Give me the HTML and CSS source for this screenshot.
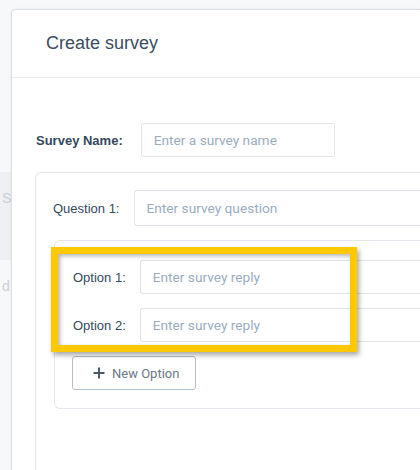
FILE: index.html
```html
<!DOCTYPE html>
<html lang="en">
<head>
<meta charset="utf-8">
<title>Create survey</title>
<link rel="stylesheet" href="styles.css">
</head>
<body>
<aside class="sidebar">
  <div class="nav-item nav-item--active">S</div>
  <div class="nav-item">d</div>
</aside>

<div class="modal">
  <div class="modal-header">Create survey</div>
  <div class="modal-body">
    <div class="name-row">
      <label class="name-label">Survey Name:</label>
      <input class="field field--name" type="text" placeholder="Enter a survey name">
    </div>

    <div class="question-card">
      <div class="question-row">
        <label class="row-label">Question 1:</label>
        <input class="field field--grow field--tall" type="text" placeholder="Enter survey question">
      </div>

      <div class="options-box">
        <div class="option-row">
          <label class="row-label">Option 1:</label>
          <input class="field field--grow" type="text" placeholder="Enter survey reply">
        </div>
        <div class="option-row">
          <label class="row-label">Option 2:</label>
          <input class="field field--grow" type="text" placeholder="Enter survey reply">
        </div>
        <button class="new-option" type="button">
          <svg class="plus" width="12" height="12" viewBox="0 0 12 12" aria-hidden="true">
            <path d="M6 0.5V11.5M0.5 6H11.5" stroke="#4b5866" stroke-width="2" fill="none"/>
          </svg>
          <span>New Option</span>
        </button>
        <div class="highlight"></div>
      </div>
    </div>
  </div>
</div>
</body>
</html>
```

FILE: styles.css
```css
html, body {
  margin: 0;
  padding: 0;
}

body {
  width: 420px;
  height: 470px;
  overflow: hidden;
  background: #f7f8fa;
  font-family: "Liberation Sans", Arial, sans-serif;
  position: relative;
}

.sidebar {
  width: 11px;
  padding-top: 172px;
}

.nav-item {
  padding: 19px 0 0 2px;
  font-size: 14px;
  line-height: 14px;
  color: #c9cfd6;
  white-space: nowrap;
}

.nav-item--active {
  height: 69px;
  background: #eef0f3;
}

.modal {
  position: absolute;
  left: 11px;
  top: 9px;
  right: 0;
  bottom: 0;
  overflow: hidden;
  background: #ffffff;
  border-top: 1px solid #dcdfe3;
  border-left: 1px solid #dcdfe3;
  border-top-left-radius: 5px;
  box-shadow: 0 0 3px rgba(0, 0, 0, 0.08);
}

.modal-header {
  height: 67px;
  display: flex;
  align-items: center;
  padding-left: 34px;
  border-bottom: 1px solid #e8ebee;
  font-size: 18px;
  color: #3b4d60;
}

.modal-body {
  padding: 45px 0 0 23px;
}

.name-row {
  display: flex;
  align-items: center;
  gap: 18px;
}

.name-label {
  padding-left: 1px;
  font-size: 13px;
  font-weight: bold;
  color: #34495e;
}

.field {
  box-sizing: border-box;
  height: 34px;
  border: 1px solid #dfe4e9;
  border-radius: 3px;
  padding: 0 0 0 12px;
  font-family: Roboto, "Liberation Sans", sans-serif;
  font-size: 13.7px;
  color: #34495e;
  background: #ffffff;
  outline: none;
}

.field::placeholder {
  color: #9aacbf;
}

.field--name {
  width: 194px;
}

.field--grow {
  flex: 1;
  min-width: 0;
  border-right: none;
  border-top-right-radius: 0;
  border-bottom-right-radius: 0;
}

.field--tall {
  height: 36px;
}

.question-card {
  margin-top: 15px;
  border-top: 1px solid #e3e6ea;
  border-left: 1px solid #e3e6ea;
  border-top-left-radius: 6px;
  padding: 17px 0 40px 17px;
  height: 320px;
}

.question-row,
.option-row {
  display: flex;
  align-items: center;
  gap: 14px;
}

.row-label {
  font-size: 13px;
  color: #34495e;
}

.options-box {
  position: relative;
  margin: 14px 0 0 1px;
  border: 1px solid #e3e6ea;
  border-right: none;
  border-radius: 6px 0 0 6px;
  padding: 19px 0 18px 18px;
  display: flex;
  flex-direction: column;
  align-items: flex-start;
  gap: 14px;
}

.option-row {
  align-self: stretch;
}

.new-option {
  box-sizing: border-box;
  margin-left: -1px;
  width: 124px;
  height: 34px;
  display: inline-flex;
  align-items: center;
  gap: 7px;
  padding: 0 0 0 20px;
  border: 1px solid #b3c0cc;
  border-radius: 3px;
  background: #ffffff;
  font-family: Roboto, "Liberation Sans", sans-serif;
  font-size: 13px;
  color: #6b7886;
}

.plus {
  display: block;
}

.highlight {
  position: absolute;
  left: -4px;
  top: 6px;
  width: 306px;
  height: 105px;
  box-sizing: border-box;
  border: 7px solid #ffc800;
  box-shadow: 2px 3px 5px rgba(0, 0, 0, 0.35), inset 2px 2px 4px rgba(0, 0, 0, 0.3);
  pointer-events: none;
}
```
